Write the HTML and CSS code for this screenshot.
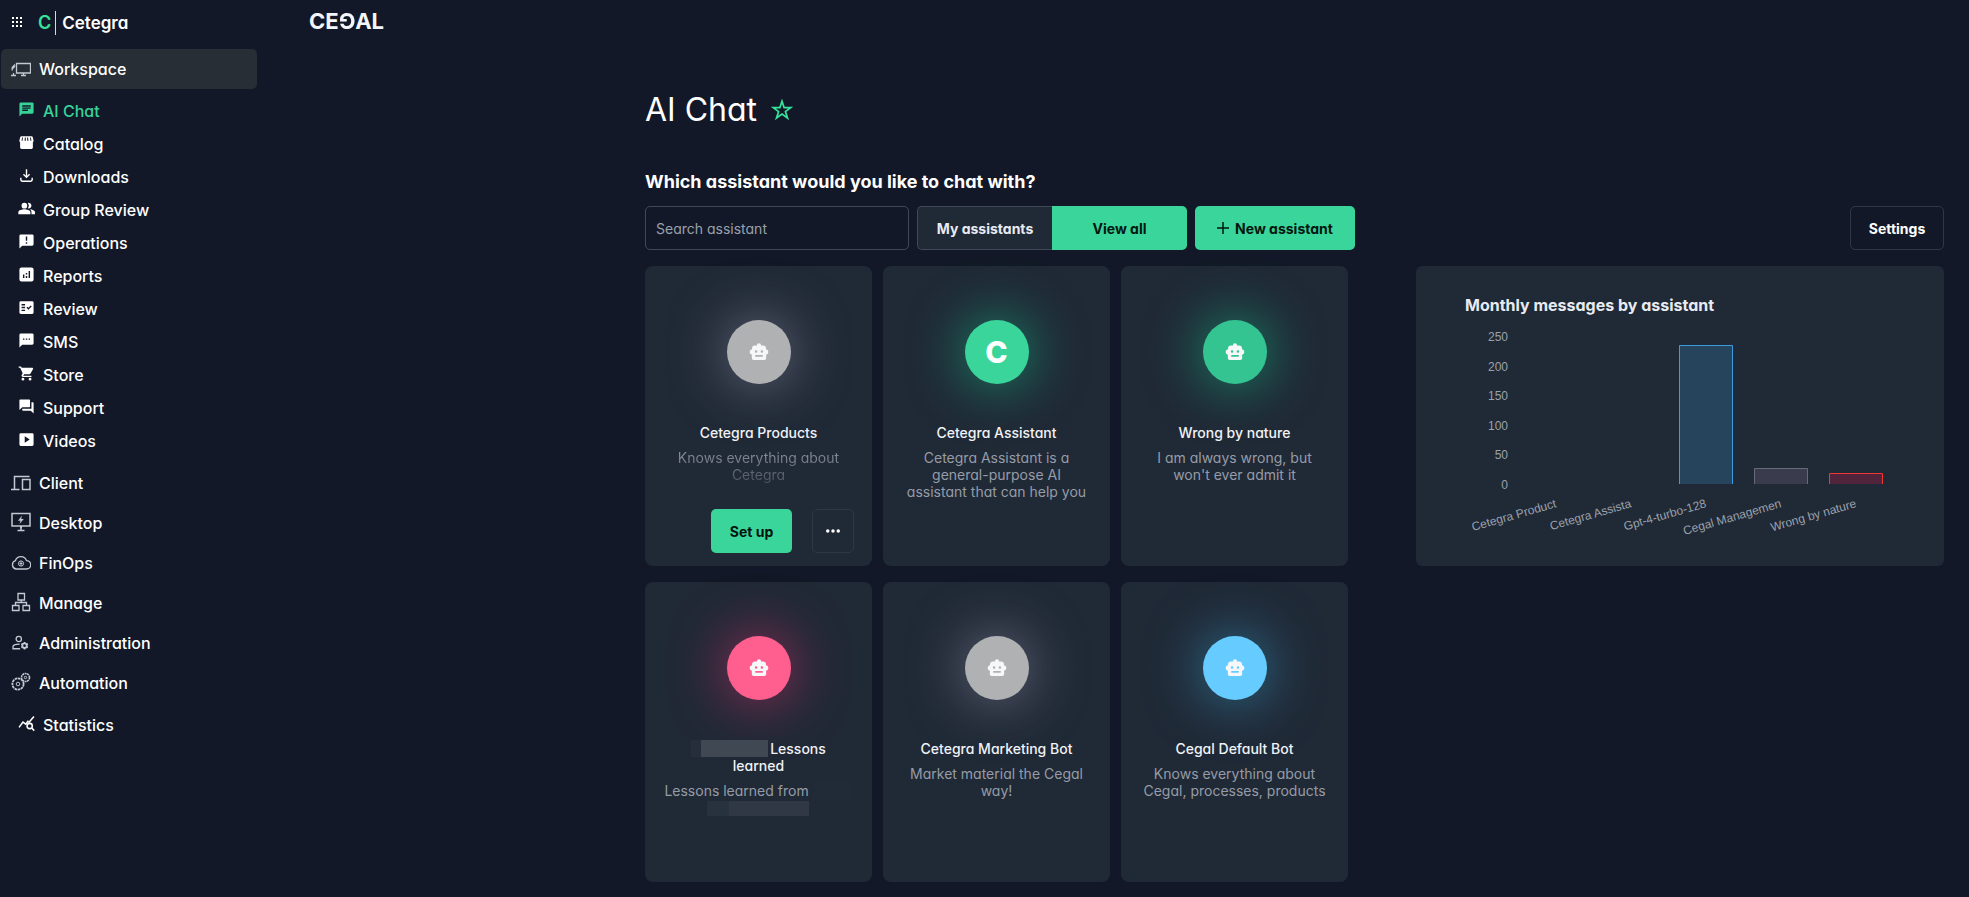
FILE: index.html
```html
<!DOCTYPE html>
<html lang="en">
<head>
<meta charset="utf-8">
<title>Cetegra – AI Chat</title>
<link rel="stylesheet" href="styles.css">
</head>
<body>
<svg class="sprite" aria-hidden="true">
  <symbol id="robot" viewBox="0 0 24 24"><path fill="currentColor" fill-rule="evenodd" d="M12 1.500a2.600 2.600 0 0 1 2.500 2.700h2.300a3.600 3.600 0 0 1 3.600 3.600v.9a3.300 3.300 0 0 1 .2 6.500V19.500a2.200 2.200 0 0 1-2.200 2.200H5.600a2.200 2.200 0 0 1-2.200-2.200v-4.300a3.300 3.300 0 0 1 .2-6.500v-.9a3.600 3.600 0 0 1 3.600-3.600h2.300A2.600 2.600 0 0 1 12 1.500zM8.500 10a1.500 1.500 0 1 0 0 3 1.500 1.500 0 0 0 0-3zm7 0a1.500 1.500 0 1 0 0 3 1.500 1.500 0 0 0 0-3zM7.500 15.500v2.300h9v-2.300z"/></symbol>
</svg>
<div class="app">
  <aside class="sidebar">
    <div class="brand">
      <button class="apps" aria-label="Apps"><svg viewBox="0 0 10 10" width="10" height="10" fill="currentColor"><path d="M0 0h2v2H0zM4 0h2v2H4zM8 0h2v2H8zM0 4h2v2H0zM4 4h2v2H4zM8 4h2v2H8zM0 8h2v2H0zM4 8h2v2H4zM8 8h2v2H8z"/></svg></button>
      <a class="brand-link" href="#"><span class="brand-mark">C</span><span class="brand-name">Cetegra</span></a>
    </div>
    <nav aria-label="Main">
      <a class="group active" href="#"><svg viewBox="0 0 20 16" class="gi"><path stroke-width="1.300" d="M5.500 2.500h14v9.500h-14zM12.500 12v2M10 14.500h5M0 14.500h5M2.500 14.500V12M1.200 9.500V6.500L4 3.500M1.200 8l2.800-3"/></svg>Workspace</a>
      <ul class="sub">
        <li><a class="current" href="#"><svg viewBox="0 0 24 24" class="si"><path d="M20 2H4a2 2 0 0 0-2 2v18l4-4h14a2 2 0 0 0 2-2V4a2 2 0 0 0-2-2zM6 9h12v2H6zm8 5H6v-2h8zm4-6H6V6h12z"/></svg>AI Chat</a></li>
        <li><a href="#"><svg viewBox="0 0 24 24" class="si"><path d="M21.900 8.900l-1-4.400A2 2 0 0 0 19 3H5a2 2 0 0 0-1.900 1.500L2 8.900c-.2 1 0 1.900.6 2.700l.4.400V19c0 1.100.9 2 2 2h14a2 2 0 0 0 2-2v-7l.3-.4c.6-.8.8-1.700.6-2.700zM7 5L6.400 9.400H5L5.800 5zm4 0v4.400H9.300L9.700 5zm3.300 0l.4 4.400H13V5zm3.900 0l.8 4.400h-1.400L17 5z"/></svg>Catalog</a></li>
        <li><a href="#"><svg viewBox="0 0 24 24" class="si"><path d="M12 16l-5-5 1.400-1.400 2.600 2.600V3h2v9.200l2.600-2.600L17 11zm-6 5a3 3 0 0 1-3-3v-3h2v3l1 1h12l1-1v-3h2v3a3 3 0 0 1-3 3z"/></svg>Downloads</a></li>
        <li><a href="#"><svg viewBox="0 0 24 24" class="si"><path d="M16.700 13.100C18 14 19 15.300 19 17v3h5v-3c0-2.200-3.600-3.500-7.300-3.900zM15 12a4 4 0 1 0-1.300-7.800 6 6 0 0 1 0 7.600c.4.100.8.200 1.300.2zM9 4a4 4 0 1 0 0 8 4 4 0 0 0 0-8zm0 9c-2.700 0-8.500 1.300-8.500 4v3h17v-3c0-2.700-5.800-4-8.500-4z"/></svg>Group Review</a></li>
        <li><a href="#"><svg viewBox="0 0 24 24" class="si"><path d="M20 2H4a2 2 0 0 0-2 2v18l4-4h14a2 2 0 0 0 2-2V4a2 2 0 0 0-2-2zm-7 13h-2v-2h2zm0-4h-2V5h2z"/></svg>Operations</a></li>
        <li><a href="#"><svg viewBox="0 0 24 24" class="si"><path d="M19 2H5a3 3 0 0 0-3 3v14a3 3 0 0 0 3 3h14a3 3 0 0 0 3-3V5a3 3 0 0 0-3-3zM9 17H7v-5h2zm4 0h-2v-3h2zm0-5h-2v-2h2zm4 5h-2V7h2z"/></svg>Reports</a></li>
        <li><a href="#"><svg viewBox="0 0 24 24" class="si"><path fill-rule="evenodd" d="M20 3H4a2 2 0 0 0-2 2v14c0 1.100.9 2 2 2h16a2 2 0 0 0 2-2V5a2 2 0 0 0-2-2zM10 17H5v-2h5zm0-4H5v-2h5zm0-4H5V7h5zm4.800 6L12 12.200l1.400-1.400 1.400 1.400L18 9l1.400 1.400z"/></svg>Review</a></li>
        <li><a href="#"><svg viewBox="0 0 24 24" class="si"><path d="M20 2H4a2 2 0 0 0-2 2v18l4-4h14a2 2 0 0 0 2-2V4a2 2 0 0 0-2-2zM9 11H7V9h2zm4 0h-2V9h2zm4 0h-2V9h2z"/></svg>SMS</a></li>
        <li><a href="#"><svg viewBox="0 0 24 24" class="si"><path d="M7 18a2 2 0 1 0 0 4 2 2 0 0 0 0-4zM1 2v2h2l3.600 7.600L5.200 14A2 2 0 0 0 7 17h12v-2H7.400l1.200-2H16a2 2 0 0 0 1.700-1L21.300 5.500A1 1 0 0 0 20.400 4H5.200l-.9-2zm16 16a2 2 0 1 0 0 4 2 2 0 0 0 0-4z"/></svg>Store</a></li>
        <li><a href="#"><svg viewBox="0 0 24 24" class="si"><path d="M21 6h-2v9H6v2a1 1 0 0 0 1 1h11l4 4V7a1 1 0 0 0-1-1zm-4 6V3a1 1 0 0 0-1-1H3a1 1 0 0 0-1 1v14l4-4h10a1 1 0 0 0 1-1z"/></svg>Support</a></li>
        <li><a href="#"><svg viewBox="0 0 24 24" class="si"><path d="M20 3H4a2 2 0 0 0-2 2v14c0 1.100.9 2 2 2h16a2 2 0 0 0 2-2V5a2 2 0 0 0-2-2zM9.500 16.500v-9l7 4.500z"/></svg>Videos</a></li>
      </ul>
      <a class="group" href="#"><svg viewBox="0 0 20 16" class="gi"><path stroke-width="1.500" d="M3.500 14.500V1.500h15M0 14.500h8.500M11.500 4.500h7.500v10h-7.500z"/></svg>Client</a>
      <a class="group" href="#"><svg viewBox="0 0 20 20" class="gi tall"><path stroke-width="1.500" d="M1 1.500h18v12.500H1zM10 14v4M6.500 18.500h7M9 15.500h2"/><path class="solid" d="M11 3.500L7 8.800h2.500L8.500 12l4.300-5h-2.600z"/></svg>Desktop</a>
      <a class="group" href="#"><svg viewBox="0 0 20 16" class="gi"><path stroke-width="1.300" d="M5 14a4.300 4.300 0 0 1-.6-8.300A5.800 5.800 0 0 1 15.500 5.600 4.200 4.200 0 0 1 15.500 14z"/><circle cx="10" cy="8.500" r="2.600"/><path d="M10 6.500v4M8.500 8.500h3"/></svg>FinOps</a>
      <a class="group" href="#"><svg viewBox="0 0 20 20" class="gi tall"><path stroke-width="1.300" d="M7 1.500h6.500V8H7zM10.200 8v2.500M4.500 13v-2.500h11V13M1.500 13.500h6.500v5H1.500zM12 13.500h6.500v5H12z"/></svg>Manage</a>
      <a class="group" href="#"><svg viewBox="0 0 20 18" class="gi"><circle cx="7.500" cy="4.500" r="3" stroke-width="1.500"/><path stroke-width="1.500" d="M9 15.500H1v-2.200c0-1.800 3-3 7.500-3"/><circle cx="14" cy="12" r="2.500" stroke-width="2"/><path stroke-width="1.800" d="M14 7.800v2M14 14.200v2M10.400 9.900l1.700 1M16 13.100l1.700 1M10.400 14.100l1.700-1M16 10.900l1.700-1"/></svg>Administration</a>
      <a class="group" href="#"><svg viewBox="0 0 20 20" class="gi tall"><circle cx="7" cy="12" r="5.600" stroke-dasharray="2.600 .6" stroke-width="1.800"/><circle cx="7" cy="12" r="1.800"/><circle cx="14.500" cy="5.500" r="4" stroke-dasharray="2 .5" stroke-width="1.600"/><circle cx="14.500" cy="5.500" r="1.200"/></svg>Automation</a>
      <a class="group stat" href="#"><svg viewBox="0 0 24 24" class="si"><path fill="none" stroke="currentColor" stroke-width="2.200" d="M1.500 17.500L7 10l4 3 3.500-5M15 11l7.500-9M19.500 18.500L23 22"/><circle cx="16.500" cy="15.500" r="3.700" fill="none" stroke="currentColor" stroke-width="2.200"/></svg>Statistics</a>
    </nav>
  </aside>

  <main class="main">
    <header class="topbar"><a class="logo" href="#" aria-label="Cegal"><span>CE</span><span class="flip">G</span><span>AL</span></a></header>
    <section class="content">
      <div class="title"><h1>AI Chat</h1><button class="star" aria-label="Favourite"><svg viewBox="0 0 22 22" width="22" height="22"><path fill="none" stroke="currentColor" stroke-width="1.700" d="M11 2.200l2.100 6.400h6.700l-5.400 3.900 2.100 6.500-5.500-4-5.500 4 2.100-6.500-5.400-3.900h6.700z"/></svg></button></div>
      <h2>Which assistant would you like to chat with?</h2>
      <div class="toolbar">
        <input class="search" type="search" placeholder="Search assistant" aria-label="Search assistant">
        <div class="toggle"><button class="mine">My assistants</button><button class="all">View all</button></div>
        <button class="new"><svg viewBox="0 0 12 12" width="12" height="12"><path stroke="currentColor" stroke-width="1.500" d="M6 0v12M0 6h12"/></svg>New assistant</button>
        <button class="outline settings">Settings</button>
      </div>
      <div class="board">
        <div class="cards">
          <article class="card"><div class="avatar grey"><svg class="bot"><use href="#robot"/></svg></div><h3>Cetegra Products</h3><p class="fade">Knows everything about Cetegra</p><div class="actions"><button class="setup">Set up</button><button class="outline more" aria-label="More"><svg viewBox="0 0 16 4" width="14" height="4" fill="currentColor"><circle cx="2" cy="2" r="2"/><circle cx="8" cy="2" r="2"/><circle cx="14" cy="2" r="2"/></svg></button></div></article>
          <article class="card"><div class="avatar green"><span class="letter">C</span></div><h3>Cetegra Assistant</h3><p>Cetegra Assistant is a general-purpose AI assistant that can help you</p></article>
          <article class="card"><div class="avatar teal"><svg class="bot"><use href="#robot"/></svg></div><h3>Wrong by nature</h3><p>I am always wrong, but won't ever admit it</p></article>
          <article class="card"><div class="avatar pink"><svg class="bot"><use href="#robot"/></svg></div><h3><span class="mask"></span>Lessons<br>learned</h3><p>Lessons learned from <span class="mask faint"></span><br><span class="mask dim"></span></p></article>
          <article class="card"><div class="avatar grey"><svg class="bot"><use href="#robot"/></svg></div><h3>Cetegra Marketing Bot</h3><p>Market material the Cegal way!</p></article>
          <article class="card"><div class="avatar blue"><svg class="bot"><use href="#robot"/></svg></div><h3>Cegal Default Bot</h3><p>Knows everything about Cegal, processes, products</p></article>
        </div>
        <section class="panel">
          <h3>Monthly messages by assistant</h3>
          <svg class="chart" viewBox="0 0 430 230" role="img" aria-label="Monthly messages by assistant">
            <g class="ticks" text-anchor="end">
              <text x="43" y="26">250</text><text x="43" y="56">200</text><text x="43" y="85">150</text><text x="43" y="115">100</text><text x="43" y="144">50</text><text x="43" y="174">0</text>
              <text transform="translate(92 192) rotate(-16)">Cetegra Product</text>
              <text transform="translate(167 192) rotate(-16)">Cetegra Assista</text>
              <text transform="translate(242 192) rotate(-16)">Gpt-4-turbo-128</text>
              <text transform="translate(317 192) rotate(-16)">Cegal Managemen</text>
              <text transform="translate(392 192) rotate(-16)">Wrong by nature</text>
            </g>
            <g stroke-width="1">
              <path class="b1" d="M214.500 169V30.500h53V169"/>
              <path class="b2" d="M289.500 169V153.500h53V169"/>
              <path class="b3" d="M364.500 169V158.500h53V169"/>
            </g>
          </svg>
        </section>
      </div>
    </section>
  </main>
</div>
</body>
</html>
```
FILE: styles.css
```css
* { box-sizing: border-box; }
body {
  margin: 0;
  background: #121827;
  color: #fff;
  font-family: Inter, "Open Sans", sans-serif;
  font-feature-settings: "cv11";
  font-size: 14px;
  line-height: 17px;
}
a { color: inherit; text-decoration: none; }
button, input { font: inherit; font-feature-settings: inherit; color: inherit; }
button { border: 0; padding: 0; background: none; cursor: pointer; }
h1, h2, h3, p, ul { margin: 0; padding: 0; font-size: inherit; }
.sprite { position: absolute; width: 0; height: 0; }
.app { display: flex; min-height: 100vh; }

.sidebar { flex: 0 0 258px; padding: 0 1px; font-size: 16px; font-weight: 500; }
.brand { display: flex; align-items: center; height: 49px; padding: 0 0 3px 11px; gap: 16px; }
.apps { display: flex; padding-bottom: 3px; }
.brand-link { display: flex; align-items: center; font-size: 17px; font-weight: 600; line-height: 24px; }
.brand-mark { color: #36e39b; padding-right: 4px; border-right: 1px solid #d6dae0; font-size: 18px; }
.brand-name { padding-left: 6px; }
.group { display: flex; align-items: center; gap: 8px; height: 40px; padding-left: 10px; border-radius: 5px; }
.group.active { background: #282e35; }
.gi { width: 20px; height: 16px; fill: none; stroke: #c3c8d2; stroke-width: 1; }
.gi.tall { height: 20px; margin-bottom: 2px; }
.solid { fill: #c3c8d2; stroke: none; }
.sub { list-style: none; padding: 6px 0 5px; }
.sub a, .stat { display: flex; align-items: center; gap: 8px; height: 33px; padding-left: 17px; }
.sub .current { color: #36d399; }
.si { width: 17px; height: 17px; fill: currentColor; margin-bottom: 4px; }
.stat { height: 44px; }

.main { flex: 1; min-width: 0; display: flex; flex-direction: column; }
.topbar { display: flex; align-items: flex-start; height: 49px; padding: 8px 0 0 51px; }
.logo { display: flex; font-size: 22px; font-weight: 700; line-height: 26px; color: #f3f5fa; }
.flip { transform: rotate(180deg); }
.content { padding: 40px 25px 15px 387px; }
.title { display: flex; align-items: center; gap: 14px; height: 42px; }
h1 { font-size: 32px; line-height: 42px; font-weight: 400; }
.star { display: flex; color: #36e39b; }
h2 { margin-top: 39px; font-size: 18px; line-height: 24px; font-weight: 700; }
.toolbar { display: flex; gap: 8px; height: 44px; margin-top: 12px; }
.toolbar button, .setup { font-weight: 700; border-radius: 5px; }
.search { width: 264px; padding: 0 10px; background: none; border: 1px solid #414856; border-radius: 5px; }
.search::placeholder { color: #9aa1ad; opacity: 1; }
.toggle { display: grid; grid-template-columns: 1fr 1fr; width: 270px; }
.toolbar .mine { background: #202936; border: 1px solid #414856; border-right: 0; border-radius: 5px 0 0 5px; color: #e8ebf2; }
.toolbar .all { background: #3ad59a; color: #04160f; border-radius: 0 5px 5px 0; }
.new { display: flex; align-items: center; justify-content: center; gap: 6px; width: 160px; background: #3ad59a; color: #04160f; }
.outline { border: 1px solid #2f3744; border-radius: 5px; }
.settings { width: 94px; margin-left: auto; }

.board { display: grid; grid-template-columns: 703fr 528fr; gap: 68px; align-items: start; margin-top: 16px; }
.cards { display: grid; grid-template-columns: repeat(3, 1fr); gap: 16px 11px; }
.card { display: flex; flex-direction: column; align-items: center; height: 300px; padding: 54px 18px 13px; border-radius: 8px; background: #202936; text-align: center; }
.avatar { display: flex; align-items: center; justify-content: center; width: 64px; height: 64px; margin-bottom: 40px; border-radius: 50%; flex: none; }
.grey { background: #b0b1b3; box-shadow: 0 0 56px rgba(176, 177, 200, .55); }
.green { background: #3ad59a; box-shadow: 0 0 56px rgba(20, 200, 140, .7); }
.teal { background: #34c492; box-shadow: 0 0 56px rgba(20, 200, 140, .7); }
.pink { background: #ff5f8f; box-shadow: 0 0 56px rgba(255, 50, 120, .6); }
.blue { background: #66ccff; box-shadow: 0 0 56px rgba(60, 180, 230, .6); }
.bot { width: 20px; height: 20px; color: #f6f7f8; }
.letter { font-size: 30px; line-height: 36px; font-weight: 800; }
.card h3 { font-weight: 500; color: #f0f2f6; }
.card p { margin-top: 8px; color: #969ca7; }
.card .fade { background: linear-gradient(#8f96a1, #4a525e); background-clip: text; color: transparent; }
.actions { display: flex; gap: 20px; width: 100%; margin-top: auto; justify-content: flex-end; }
.setup { width: 81px; height: 44px; background: #3ad59a; color: #04120c; }
.more { display: flex; align-items: center; justify-content: center; width: 42px; height: 44px; }
.mask { display: inline-block; width: 77px; height: 17px; margin-right: 2px; vertical-align: bottom; background: linear-gradient(90deg, #252e3a 10px, #404854 10px); }
.mask.faint { width: 40px; margin: 0; background: #212a37; }
.mask.dim { width: 102px; height: 15px; margin: 0; background: linear-gradient(90deg, #28313e 22px, #303846 22px); }

.panel { height: 300px; padding: 29px 49px 0; border-radius: 6px; background: #202936; }
.panel h3 { font-size: 16px; line-height: 20px; font-weight: 700; color: #e8ebf2; }
.chart { display: block; width: 100%; height: auto; }
.ticks { font-family: "Liberation Sans", sans-serif; font-size: 12px; fill: #9ba1ab; }
.b1 { fill: #27445d; stroke: #3d9bdf; }
.b2 { fill: #3b3b4e; stroke: #666a7a; }
.b3 { fill: #50243a; stroke: #f03535; }
```
